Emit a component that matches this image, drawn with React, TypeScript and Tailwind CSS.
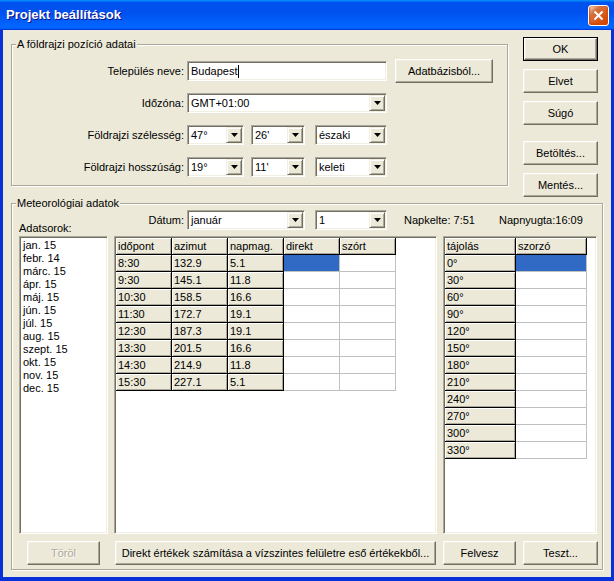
import React from "react";

const raised =
  "border border-t-white border-l-white border-r-[#716F64] border-b-[#716F64] shadow-[inset_-1px_-1px_0_#ACA899,inset_1px_1px_0_#F1EFE2]";
const sunken =
  "border border-t-[#ACA899] border-l-[#ACA899] border-r-white border-b-white shadow-[inset_1px_1px_0_#716F64,inset_-1px_-1px_0_#F1EFE2]";
const comboBtn =
  "border border-t-[#F1EFE2] border-l-[#F1EFE2] border-r-[#716F64] border-b-[#716F64] shadow-[inset_1px_1px_0_#fff,inset_-1px_-1px_0_#ACA899]";
const fixedCell =
  "h-[17px] shrink-0 border-r border-b border-black bg-[#ECE9D8] shadow-[inset_1px_1px_0_#fff,inset_-1px_-1px_0_#ACA899] pl-[2px] leading-[16px] whitespace-nowrap overflow-hidden";
const dataCell = "h-[17px] shrink-0 border-r border-b border-[#C0C0C0] bg-white";
const selCell = "h-[17px] shrink-0 border-r border-b border-[#C0C0C0] bg-[#316AC5]";

function Btn({
  className = "",
  children,
  def,
  disabled,
}: {
  className?: string;
  children: React.ReactNode;
  def?: boolean;
  disabled?: boolean;
}) {
  const face = (
    <div
      className={`flex h-full w-full items-center justify-center bg-[#ECE9D8] ${raised} ${
        disabled ? "text-[#ACA899] [text-shadow:1px_1px_0_#fff]" : ""
      }`}
    >
      {children}
    </div>
  );
  return (
    <div className={`h-[24px] shrink-0 ${def ? "border border-black" : ""} ${className}`}>{face}</div>
  );
}

function Combo({ className = "", value }: { className?: string; value: string }) {
  return (
    <div className={`flex h-[20px] shrink-0 bg-white p-[1px] ${sunken} ${className}`}>
      <div className="flex-1 pl-[2px] leading-[16px] whitespace-nowrap overflow-hidden">{value}</div>
      <div className={`flex h-[16px] w-[16px] items-center justify-center bg-[#ECE9D8] ${comboBtn}`}>
        <svg width="7" height="4" viewBox="0 0 7 4">
          <path d="M0 0H7L3.5 4Z" fill="#000" />
        </svg>
      </div>
    </div>
  );
}

function Group({
  title,
  className = "",
  children,
}: {
  title: string;
  className?: string;
  children: React.ReactNode;
}) {
  return (
    <div
      className={`relative shrink-0 border border-[#ACA899] shadow-[inset_1px_1px_0_#fff,1px_1px_0_#fff] ${className}`}
    >
      <span className="absolute left-[4px] top-[-7px] bg-[#ECE9D8] px-[1px] leading-[13px]">{title}</span>
      {children}
    </div>
  );
}

function Row({ label, children }: { label: string; children: React.ReactNode }) {
  return (
    <div className="flex h-[24px] items-center">
      <div className="w-[172px] text-right">{label}</div>
      <div className="ml-[3px] flex items-center">{children}</div>
    </div>
  );
}

const rows1 = [
  ["8:30", "132.9", "5.1"],
  ["9:30", "145.1", "11.8"],
  ["10:30", "158.5", "16.6"],
  ["11:30", "172.7", "19.1"],
  ["12:30", "187.3", "19.1"],
  ["13:30", "201.5", "16.6"],
  ["14:30", "214.9", "11.8"],
  ["15:30", "227.1", "5.1"],
];

const angles = ["0°", "30°", "60°", "90°", "120°", "150°", "180°", "210°", "240°", "270°", "300°", "330°"];

const months = [
  "jan. 15",
  "febr. 14",
  "márc. 15",
  "ápr. 15",
  "máj. 15",
  "jún. 15",
  "júl. 15",
  "aug. 15",
  "szept. 15",
  "okt. 15",
  "nov. 15",
  "dec. 15",
];

export default function App() {
  return (
    <div className="flex h-[581px] w-[614px] flex-col bg-[#0831D9] font-['Liberation_Sans',Arial,sans-serif] text-[11px] text-black select-none">
      {/* Title bar */}
      <div className="flex h-[30px] shrink-0 items-center pl-[6px] pr-[5px] bg-[linear-gradient(180deg,#0997ff,#0053ee_8%,#0050ee_40%,#06f_88%,#06f_93%,#005bff_95%,#003dd7_96%,#003dd7)]">
        <span className="flex-1 text-[13px] font-bold text-white [text-shadow:1px_1px_#0f1089]">
          Projekt beállítások
        </span>
        <div className="flex h-[21px] w-[21px] items-center justify-center rounded-[3px] border border-white bg-[radial-gradient(circle_at_90%_90%,#cc4600_0,#dc6527_55%,#cd7546_70%,#ffccb2_90%,#fff_100%)] shadow-[inset_0_-1px_2px_1px_#da4600]">
          <svg width="11" height="11" viewBox="0 0 11 11">
            <path d="M1.5 1.5L9.5 9.5M9.5 1.5L1.5 9.5" stroke="#fff" strokeWidth="2" />
          </svg>
        </div>
      </div>

      {/* Client */}
      <div className="mx-[3px] mb-[4px] flex flex-1 flex-col bg-[#ECE9D8]">
        {/* Top row */}
        <div className="flex items-start pl-[8px] pt-[7px]">
          <Group title="A földrajzi pozíció adatai" className="mt-[7px] h-[142px] w-[497px]">
            <div className="flex flex-col gap-[8px] pt-[14px]">
              <Row label="Település neve:">
                <div className={`flex h-[20px] w-[200px] items-center bg-white p-[1px] pl-[3px] ${sunken}`}>
                  <span className="leading-[16px]">Budapest</span>
                  <span className="ml-px h-[13px] w-px bg-black" />
                </div>
                <Btn className="ml-[8px] w-[98px]">Adatbázisból...</Btn>
              </Row>
              <Row label="Időzóna:">
                <Combo className="w-[200px]" value="GMT+01:00" />
              </Row>
              <Row label="Földrajzi szélesség:">
                <Combo className="w-[57px]" value="47°" />
                <Combo className="ml-[7px] w-[54px]" value="26'" />
                <Combo className="ml-[10px] w-[72px]" value="északi" />
              </Row>
              <Row label="Földrajzi hosszúság:">
                <Combo className="w-[57px]" value="19°" />
                <Combo className="ml-[7px] w-[54px]" value="11'" />
                <Combo className="ml-[10px] w-[72px]" value="keleti" />
              </Row>
            </div>
          </Group>

          <div className="ml-[15px] flex w-[75px] flex-col">
            <Btn def>OK</Btn>
            <Btn className="mt-[8px]">Elvet</Btn>
            <Btn className="mt-[8px]">Súgó</Btn>
            <Btn className="mt-[16px]">Betöltés...</Btn>
            <Btn className="mt-[8px]">Mentés...</Btn>
          </div>
        </div>

        {/* Meteorological group */}
        <Group title="Meteorológiai adatok" className="ml-[8px] mt-[6px] h-[367px] w-[592px]">
          <div className="flex flex-col pt-[6px]">
            {/* header row */}
            <div className="flex h-[26px]">
              <div className="flex w-[138px] items-end pb-[1px] pl-[7px] leading-[13px]">Adatsorok:</div>
              <div className="flex h-[20px] w-[34px] items-center justify-end">Dátum:</div>
              <Combo className="ml-[3px] w-[118px]" value="január" />
              <Combo className="ml-[10px] w-[72px]" value="1" />
              <div className="ml-[17px] flex h-[20px] w-[95px] items-center">Napkelte: 7:51</div>
              <div className="flex h-[20px] items-center">Napnyugta:16:09</div>
            </div>

            {/* panels */}
            <div className="flex h-[298px] pl-[7px]">
              <div className={`w-[89px] bg-white p-[1px] pl-[3px] pt-[2px] ${sunken}`}>
                {months.map((m) => (
                  <div key={m} className="leading-[13px]">
                    {m}
                  </div>
                ))}
              </div>

              <div className={`ml-[6px] w-[323px] overflow-hidden bg-white p-[1px] ${sunken}`}>
                <div className="flex">
                  {["időpont", "azimut", "napmag.", "direkt", "szórt"].map((h) => (
                    <div key={h} className={`w-[56px] ${fixedCell}`}>
                      {h}
                    </div>
                  ))}
                </div>
                {rows1.map((r, i) => (
                  <div key={i} className="flex">
                    {r.map((c, j) => (
                      <div key={j} className={`w-[56px] ${fixedCell}`}>
                        {c}
                      </div>
                    ))}
                    <div className={`w-[56px] ${i === 0 ? selCell : dataCell}`} />
                    <div className={`w-[56px] ${dataCell}`} />
                  </div>
                ))}
              </div>

              <div className={`ml-[6px] w-[154px] overflow-hidden bg-white p-[1px] ${sunken}`}>
                <div className="flex">
                  <div className={`w-[71px] ${fixedCell}`}>tájolás</div>
                  <div className={`w-[71px] ${fixedCell}`}>szorzó</div>
                </div>
                {angles.map((a, i) => (
                  <div key={a} className="flex">
                    <div className={`w-[71px] ${fixedCell}`}>{a}</div>
                    <div className={`w-[71px] ${i === 0 ? selCell : dataCell}`} />
                  </div>
                ))}
              </div>
            </div>

            {/* bottom buttons */}
            <div className="mt-[7px] flex">
              <Btn disabled className="ml-[15px] w-[73px]">
                Töröl
              </Btn>
              <Btn className="ml-[15px] w-[321px]">
                Direkt értékek számítása a vízszintes felületre eső értékekből...
              </Btn>
              <Btn className="ml-[7px] w-[73px]">Felvesz</Btn>
              <Btn className="ml-[7px] w-[75px]">Teszt...</Btn>
            </div>
          </div>
        </Group>
      </div>
    </div>
  );
}
